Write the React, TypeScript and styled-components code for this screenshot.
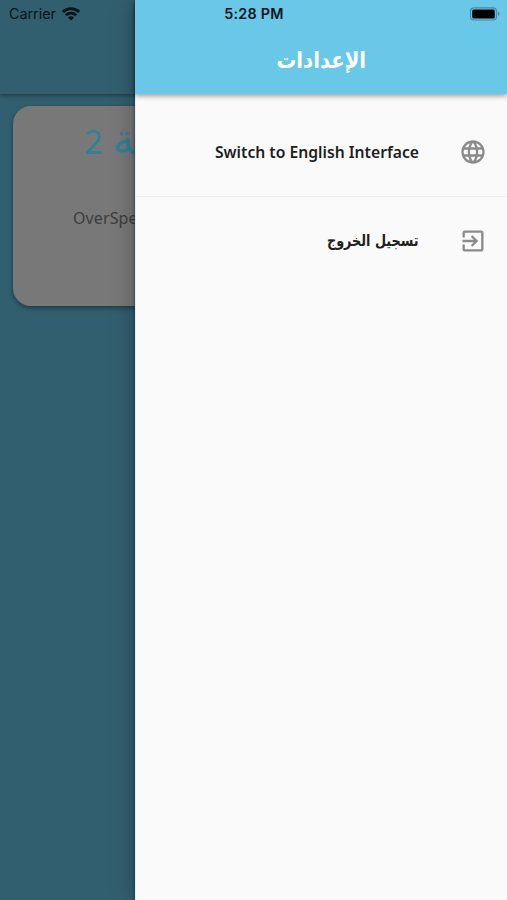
import React from "react";
import styled, { createGlobalStyle } from "styled-components";
import { MdExitToApp, MdLanguage } from "react-icons/md";

const GlobalStyle = createGlobalStyle`
  * { box-sizing: border-box; }
  body { margin: 0; overflow: hidden; }
`;

const Screen = styled.div`
  position: relative;
  width: 507px;
  height: 900px;
  overflow: hidden;
  background: #325f6f;
  font-family: Inter, "Liberation Sans", sans-serif;
`;

const StatusBar = styled.div`
  position: absolute;
  inset: 0 0 auto 0;
  z-index: 3;
  height: 27px;
  padding: 0 8px 0 9px;
  display: grid;
  grid-template-columns: 1fr auto 1fr;
  align-items: center;
  color: #06141a;
`;

const Carrier = styled.div`
  display: flex;
  align-items: center;
  gap: 6px;
  font-size: 14.3px;
  line-height: 27px;
  color: #04141a;
`;

const Clock = styled.div`
  font-size: 14.3px;
  font-weight: 600;
  letter-spacing: 0.3px;
`;

const BatteryIcon = styled.svg`
  justify-self: end;
  display: block;
  margin-right: -1px;
`;

const Dashboard = styled.div`
  height: 100%;
`;

const DashboardHeader = styled.div`
  height: 94px;
  background: #325f6f;
  box-shadow: 0 2px 4px rgba(0, 0, 0, 0.32);
`;

const VehicleCard = styled.div`
  width: 480px;
  height: 200px;
  margin: 12px 0 0 13px;
  border-radius: 18px;
  background: #787878;
  box-shadow: 0 2px 5px rgba(0, 0, 0, 0.4);
  overflow: hidden;
`;

const VehicleName = styled.div`
  display: flex;
  flex-direction: row-reverse;
  justify-content: flex-end;
  align-items: baseline;
  gap: 9px;
  height: 44px;
  margin: 9px 0 0 71px;
  white-space: nowrap;
  font: 33px/44px "Noto Sans", "DejaVu Sans", sans-serif;
  color: #2f8199;
`;

const VehicleWord = styled.span`
  font-size: 44px;
  line-height: 44px;
`;

const VehicleAlert = styled.div`
  margin: 47px 0 0 60px;
  font: 16px/24px "Noto Sans", sans-serif;
  letter-spacing: 0.1px;
  color: #3c3c3c;
`;

const Drawer = styled.aside`
  position: absolute;
  inset: 0 0 0 135px;
  z-index: 2;
  background: #fafafa;
  border-left: 1px solid #e4edf0;
  box-shadow: -1px 0 2px rgba(20, 40, 60, 0.45), -4px 0 20px rgba(0, 0, 0, 0.22);
  direction: rtl;
`;

const DrawerHeader = styled.header`
  height: 94px;
  margin-left: -1px;
  padding-top: 25px;
  display: flex;
  align-items: center;
  justify-content: center;
  background: #69c7e8;
  box-shadow: 0 2px 5px rgba(0, 0, 0, 0.38);
`;

const Title = styled.h1`
  margin: 0;
  font: bold 23px/40px "DejaVu Sans", sans-serif;
  color: #fff;
  transform: scaleX(0.855);
`;

const MenuItem = styled.button<{ $divided?: boolean }>`
  width: 100%;
  height: ${(p) => (p.$divided ? 103 : 87)}px;
  padding: ${(p) => (p.$divided ? 14 : 0)}px 20px 0 0;
  border: 0;
  border-bottom: ${(p) => (p.$divided ? "1px solid #eeeeee" : "0")};
  background: transparent;
  display: flex;
  align-items: center;
  gap: 40px;
  color: #1f1f1f;

  svg {
    flex: none;
    color: #8a8a8a;
  }
`;

const ItemLabel = styled.span<{ $latin?: boolean }>`
  white-space: nowrap;
  transform-origin: right center;
  transform: ${(p) => (p.$latin ? "none" : "scaleX(0.8)")};
  font: ${(p) =>
    p.$latin
      ? '600 15.7px/24px "Noto Sans", sans-serif'
      : 'bold 16px/24px "DejaVu Sans", sans-serif'};
`;

function WifiIcon() {
  return (
    <svg width="18" height="14" viewBox="0 0 18 14" fill="none" stroke="currentColor">
      <path d="M.9 4.9C5.4 .4 12.6 .4 17.1 4.9" strokeWidth="2.8" />
      <path d="M3.8 8.2c2.9-2.8 7.5-2.8 10.4 0" strokeWidth="2.6" />
      <path d="M9 13.6 6 10.5c1.6-1.6 4.4-1.6 6 0Z" fill="currentColor" stroke="none" />
    </svg>
  );
}

function Battery() {
  return (
    <BatteryIcon width="31" height="14" viewBox="0 0 31 14">
      <rect x="1.5" y=".8" width="26" height="12.2" rx="3.5" fill="none" stroke="#448ba4" strokeWidth="1.2" />
      <rect x="3.2" y="2.4" width="22.6" height="9" rx="1.5" fill="#000" />
      <path d="M29 4.8c2 .7 2 3.5 0 4.2Z" fill="#448ba4" />
    </BatteryIcon>
  );
}

export default function App() {
  return (
    <>
      <GlobalStyle />
      <Screen>
        <StatusBar>
          <Carrier>
            Carrier <WifiIcon />
          </Carrier>
          <Clock>5:28 PM</Clock>
          <Battery />
        </StatusBar>
        <Dashboard>
          <DashboardHeader />
          <VehicleCard>
            <VehicleName>
              <VehicleWord>ـة</VehicleWord>
              <span>2</span>
            </VehicleName>
            <VehicleAlert>OverSpeed</VehicleAlert>
          </VehicleCard>
        </Dashboard>
        <Drawer>
          <DrawerHeader>
            <Title>الإعدادات</Title>
          </DrawerHeader>
          <MenuItem $divided>
            <MdLanguage size={28} />
            <ItemLabel $latin>Switch to English Interface</ItemLabel>
          </MenuItem>
          <MenuItem>
            <MdExitToApp size={28} />
            <ItemLabel>تسجيل الخروج</ItemLabel>
          </MenuItem>
        </Drawer>
      </Screen>
    </>
  );
}
